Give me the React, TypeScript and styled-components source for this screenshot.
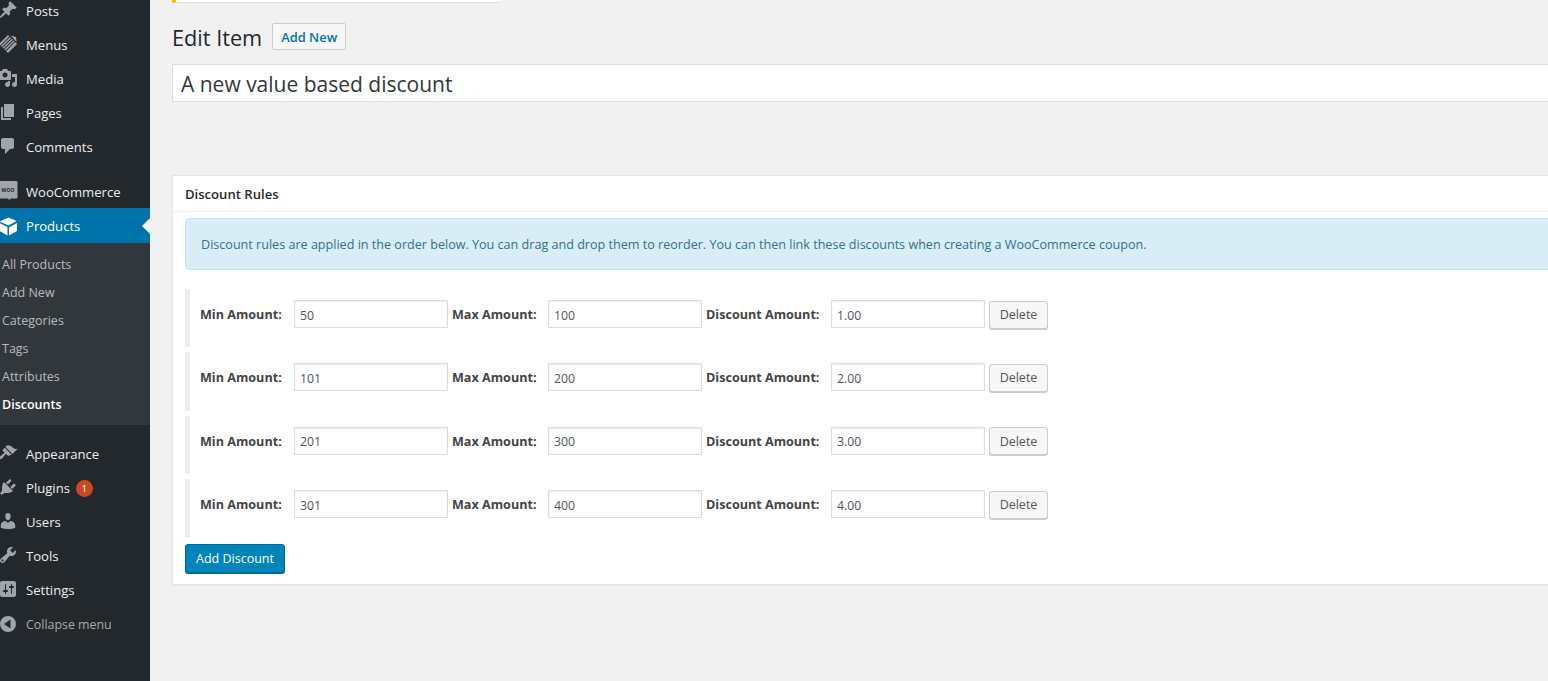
import React from "react";
import styled, { createGlobalStyle } from "styled-components";

const Global = createGlobalStyle`
  html, body { margin: 0; padding: 0; height: 100%; overflow: hidden; background: #f1f1f1; }
  body { font-family: "Open Sans", "Liberation Sans", sans-serif; font-size: 13px; color: #444; }
  * { box-sizing: border-box; }
`;

const Page = styled.div`
  display: flex;
  width: 1548px;
  height: 681px;
  overflow: hidden;
`;

const Sidebar = styled.nav`
  flex: 0 0 150px;
  margin-top: -7px;
  background: #23282d;
`;

const Menu = styled.ul`
  list-style: none;
  margin: 0;
  padding: 0;
`;

const Item = styled.li<{ $active?: boolean; $after?: number }>`
  position: relative;
  display: flex;
  align-items: center;
  height: ${(p) => (p.$active ? 35 : 34)}px;
  margin-bottom: ${(p) => p.$after ?? 0}px;
  padding-top: ${(p) => (p.$active ? 0 : 2)}px;
  font-size: 13.1px;
  color: ${(p) => (p.$active ? "#fff" : "#eee")};
  background: ${(p) => (p.$active ? "#0073aa" : "transparent")};
`;

const Collapse = styled(Item)`
  margin-top: 1px;
  padding-top: 0;
  color: #aaa;
  font-size: 12.4px;
`;

const IconSvg = styled.svg<{ $bright?: boolean; $lift?: number }>`
  flex: none;
  width: 20px;
  height: 20px;
  margin: -${(p) => p.$lift ?? 2}px 8px 0 -2px;
  fill: ${(p) => (p.$bright ? "#fff" : "#a0a5aa")};
`;

const ActiveArrow = styled.span`
  position: absolute;
  right: 0;
  top: 50%;
  margin-top: -8px;
  border: 8px solid transparent;
  border-left-width: 0;
  border-right-color: #f1f1f1;
`;

const Badge = styled.span`
  display: inline-flex;
  align-items: center;
  justify-content: center;
  width: 17px;
  height: 17px;
  margin-left: 6px;
  border-radius: 50%;
  background: #ca4a1f;
  color: #fff;
  font-size: 9px;
`;

const Submenu = styled.ul`
  list-style: none;
  margin: 0 0 11px;
  padding: 7px 0 7px 2px;
  background: #32373c;
`;

const SubItem = styled.li<{ $current?: boolean }>`
  display: flex;
  align-items: center;
  height: 28px;
  font-size: 12.5px;
  color: ${(p) => (p.$current ? "#fff" : "rgba(240,245,250,.7)")};
  font-weight: ${(p) => (p.$current ? 600 : 400)};
`;

const Main = styled.main`
  flex: 1;
  min-width: 0;
  padding-left: 22px;
  margin-right: -20px;
`;

const TopNotice = styled.div`
  width: 328px;
  height: 3px;
  background: #fff;
  border-left: 4px solid #ffb900;
  border-bottom: 1px solid #ddd;
`;

const TitleRow = styled.div`
  display: flex;
  align-items: center;
  height: 47px;
  margin-top: 10px;
`;

const Heading = styled.h1`
  margin: 0 10px 0 0;
  padding-top: 2px;
  font-size: 21.7px;
  font-weight: 400;
  color: #23282d;
`;

const SmallButton = styled.a`
  display: inline-flex;
  align-items: center;
  height: 27px;
  padding: 0 8px;
  border: 1px solid #ccc;
  border-radius: 2px;
  background: #f7f7f7;
  color: #0073aa;
  font-size: 12.9px;
  font-weight: 600;
`;

const TitleInput = styled.input`
  display: block;
  width: 100%;
  height: 38px;
  margin-top: 4px;
  padding: 2px 8px 0;
  border: 1px solid #ddd;
  background: #fff;
  color: #32373c;
  font: 400 21px "Open Sans", sans-serif;
  outline: 0;
`;

const Card = styled.section`
  margin-top: 73px;
  background: #fff;
  border: 1px solid #e5e5e5;
  box-shadow: 0 1px 1px rgba(0, 0, 0, 0.04);
  padding-bottom: 11px;
`;

const CardHeader = styled.h2`
  display: flex;
  align-items: center;
  height: 36px;
  margin: 0;
  padding-left: 12px;
  border-bottom: 1px solid #eee;
  font-size: 13.1px;
  font-weight: 600;
  color: #23282d;
`;

const CardBody = styled.div`
  padding: 6px 12px 0;
`;

const Info = styled.div`
  display: flex;
  align-items: center;
  height: 52px;
  padding-left: 15px;
  margin-bottom: 19px;
  background: #d9edf7;
  border: 1px solid #bce8f1;
  border-radius: 4px;
  color: #31708f;
  font-size: 12.58px;
`;

const Rule = styled.div`
  display: flex;
  align-items: flex-start;
  height: 58.4px;
  margin-bottom: 5px;
  padding: 11px 0 0 10px;
  border-left: 5px solid #eee;
`;

const FieldLabel = styled.label<{ $w: number }>`
  flex: 0 0 ${(p) => p.$w}px;
  line-height: 30px;
  font-size: 12.6px;
  font-weight: 700;
  color: #444;
`;

const Field = styled.input`
  flex: 0 0 154px;
  min-width: 0;
  width: 154px;
  height: 28px;
  margin-right: 4px;
  padding: 2px 5px 0;
  border: 1px solid #ddd;
  box-shadow: inset 0 1px 2px rgba(0, 0, 0, 0.07);
  background: #fff;
  color: #50555a;
  font: 400 12.3px "Open Sans", sans-serif;
  outline: 0;
`;

const DeleteButton = styled.button`
  width: 59px;
  height: 28px;
  margin-top: 0.6px;
  padding: 0;
  border: 1px solid #ccc;
  border-radius: 3px;
  background: #f7f7f7;
  box-shadow: 0 1px 0 #ccc;
  color: #555;
  font: 400 12.5px "Open Sans", sans-serif;
`;

const PrimaryButton = styled.button`
  display: block;
  width: 100px;
  height: 29px;
  margin-top: 6px;
  padding: 0;
  border: 1px solid #006799;
  border-radius: 3px;
  background: #0085ba;
  box-shadow: 0 1px 0 #006799;
  color: #fff;
  font: 400 12.5px "Open Sans", sans-serif;
`;

const paths = {
  posts:
    "M10.44 3.02l1.82-1.82 6.36 6.35-1.83 1.82c-1.05-.68-2.48-.57-3.41.36l-.75.75c-.92.93-1.04 2.35-.35 3.41l-1.83 1.82-2.41-2.41-2.8 2.79c-.42.42-3.38 2.71-3.8 2.29s1.86-3.39 2.28-3.81l2.79-2.79L4.1 9.36l1.83-1.82c1.05.69 2.48.57 3.4-.36l.75-.75c.93-.92 1.05-2.35.36-3.41z",
  media:
    "M13 11V4c0-.55-.45-1-1-1h-1.67L9 1H5L3.67 3H2c-.55 0-1 .45-1 1v7c0 .55.45 1 1 1h10c.55 0 1-.45 1-1zM7 4.5c1.38 0 2.5 1.12 2.5 2.5S8.38 9.5 7 9.5 4.5 8.38 4.5 7 5.62 4.5 7 4.5zM14 6h5v10.5c0 1.38-1.12 2.5-2.5 2.5S14 17.88 14 16.5s1.12-2.5 2.5-2.5c.17 0 .34.02.5.05V9h-3V6zm-4 8.05V13h2v3.5c0 1.38-1.12 2.5-2.5 2.5S7 17.88 7 16.5 8.12 14 9.5 14c.17 0 .34.02.5.05z",
  pages: "M6 15V2h10v13H6zm-1 1h8v2H3V5h2v11z",
  comments:
    "M5 2h9c1.1 0 2 .9 2 2v7c0 1.1-.9 2-2 2h-2l-5 5v-5H5c-1.1 0-2-.9-2-2V4c0-1.1.9-2 2-2z",
  appearance:
    "M14.48 11.06L7.41 3.99l1.5-1.5c.5-.56 2.3-.47 3.51.32 1.21.8 1.43 1.28 2.91 2.1 1.18.64 2.45 1.26 4.45.85zm-.71.71L6.7 4.7 4.93 6.47c-.39.39-.39 1.02 0 1.41l1.06 1.06c.39.39.39 1.03 0 1.42-.6.6-1.43 1.11-2.21 1.69-.35.26-.7.53-1.01.84C1.43 13.23.4 14.95 1.4 15.95c.9.9 2.46-.08 3.33-1.13.3-.37.57-.76.82-1.13.55-.8 1.07-1.62 1.65-2.21.39-.39 1.03-.39 1.42 0l1.06 1.06c.39.39 1.02.39 1.41 0z",
  plugins:
    "M13.11 4.36L9.87 7.6 8 5.73l3.24-3.24c.35-.34 1.05-.2 1.56.32.52.51.66 1.21.31 1.55zm-8 1.77l.91-1.12 9.01 9.01-1.19.84c-.71.71-2.63 1.16-3.82 1.16H6.14L4.9 17.26c-.59.59-1.54.59-2.12 0-.59-.58-.59-1.53 0-2.12l1.24-1.24v-3.88c0-1.13.4-3.19 1.09-3.89zm7.26 3.97l3.24-3.24c.34-.35 1.04-.21 1.55.31.52.51.66 1.21.31 1.55l-3.24 3.25z",
  users:
    "M10 9.25c-2.27 0-2.73-3.44-2.73-3.44C7 4.02 7.82 2 9.97 2c2.16 0 2.98 2.02 2.71 3.81 0 0-.41 3.44-2.68 3.44zm0 2.57L12.72 10c2.39 0 4.52 2.33 4.52 4.53v2.49s-3.65 1.13-7.24 1.13c-3.65 0-7.24-1.13-7.24-1.13v-2.49c0-2.25 1.94-4.48 4.47-4.48z",
  tools:
    "M16.68 9.77c-1.34 1.34-3.3 1.67-4.95.99l-5.41 6.52c-.99.99-2.59.99-3.58 0s-.99-2.59 0-3.57l6.52-5.42c-.68-1.65-.35-3.61.99-4.95 1.28-1.28 3.12-1.62 4.72-1.06l-2.89 2.89 2.82 2.82 2.86-2.87c.53 1.58.18 3.39-1.08 4.65zM3.81 16.21c.4.39 1.04.39 1.43 0 .4-.4.4-1.04 0-1.43-.39-.4-1.03-.4-1.43 0-.39.39-.39 1.03 0 1.43z",
  settings:
    "M18 16V4c0-1.1-.9-2-2-2H4c-1.1 0-2 .9-2 2v12c0 1.1.9 2 2 2h12c1.1 0 2-.9 2-2zM8 11h1c.55 0 1 .45 1 1s-.45 1-1 1H8v1.5c0 .28-.22.5-.5.5s-.5-.22-.5-.5V13H6c-.55 0-1-.45-1-1s.45-1 1-1h1V5.5c0-.28.22-.5.5-.5s.5.22.5.5V11zm5-2h-1c-.55 0-1-.45-1-1s.45-1 1-1h1V5.5c0-.28.22-.5.5-.5s.5.22.5.5V7h1c.55 0 1 .45 1 1s-.45 1-1 1h-1v5.5c0 .28-.22.5-.5.5s-.5-.22-.5-.5V9z",
  collapse: "M10 2a8 8 0 100 16 8 8 0 000-16zm2.5 3.5v9L6 10z",
  products:
    "M10.5 1.500L1.500 5.500l9 4 8-4.500zM1.500 7v8l8 4.500V11zM19 7l-8 4.500V19.500l8-4.500z",
};

const Icon = ({ d, bright, lift }: { d: string; bright?: boolean; lift?: number }) => (
  <IconSvg $bright={bright} $lift={lift} viewBox="0 0 20 20">
    <path d={d} fillRule="evenodd" />
  </IconSvg>
);

const MenusIcon = () => (
  <IconSvg viewBox="0 0 20 20">
    <g transform="rotate(45 10 10)">
      <rect x="3.600" y="3.600" width="12.800" height="12.800" />
      <path d="M5.600 3.600h.9v12.800h-.9zM8 3.600h.9v12.800H8zM10.400 3.600h.9v12.800h-.9zM12.800 3.600h.9v12.800h-.9z" fill="#23282d" />
    </g>
    <path d="M13 1.500l5 1.500.6 5-2.200-2.200z" />
  </IconSvg>
);

const WooLabel = styled.text`
  font: 700 5px "Open Sans", sans-serif;
  fill: #23282d;
`;

const WooIcon = () => (
  <IconSvg viewBox="0 0 20 20">
    <path d="M2 0h16c1 0 1.500.6 1.500 1.500V16c0 1-.6 1.500-1.500 1.500h-5l-2 1.500-.6-1.500H2c-1 0-1.500-.6-1.500-1.500V1.500C.5.600 1 0 2 0z" />
    <WooLabel x="10" y="10.500" textAnchor="middle">WOO</WooLabel>
  </IconSvg>
);

const rules = [
  ["50", "100", "1.00"],
  ["101", "200", "2.00"],
  ["201", "300", "3.00"],
  ["301", "400", "4.00"],
];

const subs = ["All Products", "Add New", "Categories", "Tags", "Attributes"];

export default function App() {
  return (
    <Page>
      <Global />
      <Sidebar>
        <Menu>
          <Item><Icon d={paths.posts} />Posts</Item>
          <Item><MenusIcon />Menus</Item>
          <Item><Icon d={paths.media} />Media</Item>
          <Item><Icon d={paths.pages} />Pages</Item>
          <Item $after={11}><Icon d={paths.comments} />Comments</Item>
          <Item><WooIcon />WooCommerce</Item>
          <Item $active><Icon d={paths.products} bright lift={0} />Products<ActiveArrow /></Item>
        </Menu>
        <Submenu>
          {subs.map((s) => <SubItem key={s}>{s}</SubItem>)}
          <SubItem $current>Discounts</SubItem>
        </Submenu>
        <Menu>
          <Item><Icon d={paths.appearance} />Appearance</Item>
          <Item><Icon d={paths.plugins} />Plugins<Badge>1</Badge></Item>
          <Item><Icon d={paths.users} />Users</Item>
          <Item><Icon d={paths.tools} />Tools</Item>
          <Item><Icon d={paths.settings} />Settings</Item>
          <Collapse><Icon d={paths.collapse} lift={0} />Collapse menu</Collapse>
        </Menu>
      </Sidebar>
      <Main>
        <TopNotice />
        <TitleRow>
          <Heading>Edit Item</Heading>
          <SmallButton>Add New</SmallButton>
        </TitleRow>
        <TitleInput defaultValue="A new value based discount" />
        <Card>
          <CardHeader>Discount Rules</CardHeader>
          <CardBody>
            <Info>
              Discount rules are applied in the order below. You can drag and drop them to reorder. You can then link these discounts when creating a WooCommerce coupon.
            </Info>
            {rules.map(([a, b, c]) => (
              <Rule key={a}>
                <FieldLabel $w={94}>Min Amount:</FieldLabel>
                <Field defaultValue={a} />
                <FieldLabel $w={96}>Max Amount:</FieldLabel>
                <Field defaultValue={b} />
                <FieldLabel $w={125}>Discount Amount:</FieldLabel>
                <Field defaultValue={c} />
                <DeleteButton>Delete</DeleteButton>
              </Rule>
            ))}
            <PrimaryButton>Add Discount</PrimaryButton>
          </CardBody>
        </Card>
      </Main>
    </Page>
  );
}
